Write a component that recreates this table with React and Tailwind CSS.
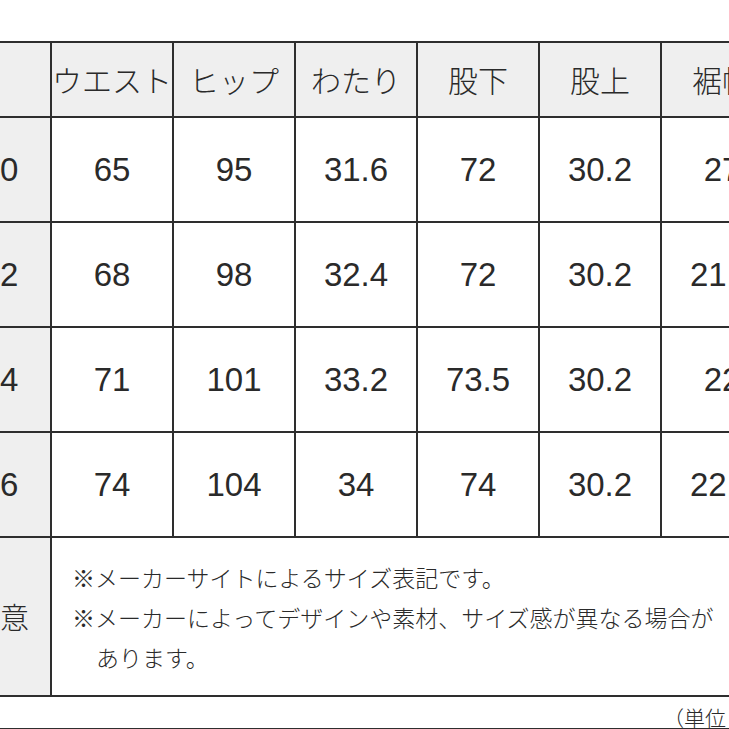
import React from "react";

const headers = ["", "ウエスト", "ヒップ", "わたり", "股下", "股上", "裾幅"];

const rows = [
  ["30", "65", "95", "31.6", "72", "30.2", "27"],
  ["32", "68", "98", "32.4", "72", "30.2", "21.5"],
  ["34", "71", "101", "33.2", "73.5", "30.2", "22"],
  ["36", "74", "104", "34", "74", "30.2", "22.5"],
];

const cell = "border-2 border-[#2e2e2e] text-center align-middle whitespace-nowrap overflow-hidden";

const App = () => {
  return (
    <div
      className="w-[729px] h-[729px] overflow-hidden bg-white text-[#2a2a2a] font-light"
      style={{ fontFamily: '"Noto Sans CJK JP", "Noto Sans", sans-serif' }}
    >
      <div className="pt-[41px] ml-[-52px]">
        <table className="border-collapse table-fixed w-[834px]">
          <colgroup>
            <col className="w-[102px]" />
            <col className="w-[122px]" />
            <col className="w-[122px]" />
            <col className="w-[122px]" />
            <col className="w-[122px]" />
            <col className="w-[122px]" />
            <col className="w-[122px]" />
          </colgroup>
          <thead>
            <tr className="h-[75px] bg-[#efefef]">
              {headers.map((h, i) => (
                <th key={i} className={`${cell} font-light text-[30px]`}>
                  {h}
                </th>
              ))}
            </tr>
          </thead>
          <tbody>
            {rows.map((r) => (
              <tr key={r[0]} className="h-[105px]">
                {r.map((v, i) => (
                  <td
                    key={i}
                    className={`${cell} text-[33px] font-['Liberation_Sans','Noto_Sans_CJK_JP',sans-serif] font-normal ${i === 0 ? "bg-[#efefef]" : "bg-white"}`}
                  >
                    {v}
                  </td>
                ))}
              </tr>
            ))}
            <tr className="h-[159px]">
              <td className={`${cell} bg-[#efefef] text-[29px]`}>注意</td>
              <td colSpan={6} className="border-2 border-[#2e2e2e] align-middle text-left pl-[20px] text-[23px] leading-[40px] whitespace-nowrap overflow-hidden">
                <div>※メーカーサイトによるサイズ表記です。</div>
                <div>※メーカーによってデザインや素材、サイズ感が異なる場合が</div>
                <div className="pl-[24px]">あります。</div>
              </td>
            </tr>
          </tbody>
        </table>
      </div>
      <div className="pl-[663px] pt-[9px] border-b-2 border-[#2e2e2e] text-[21px] leading-[22px] whitespace-nowrap w-[729px] overflow-hidden">
        （単位：cm）
      </div>
    </div>
  );
};

export default App;
